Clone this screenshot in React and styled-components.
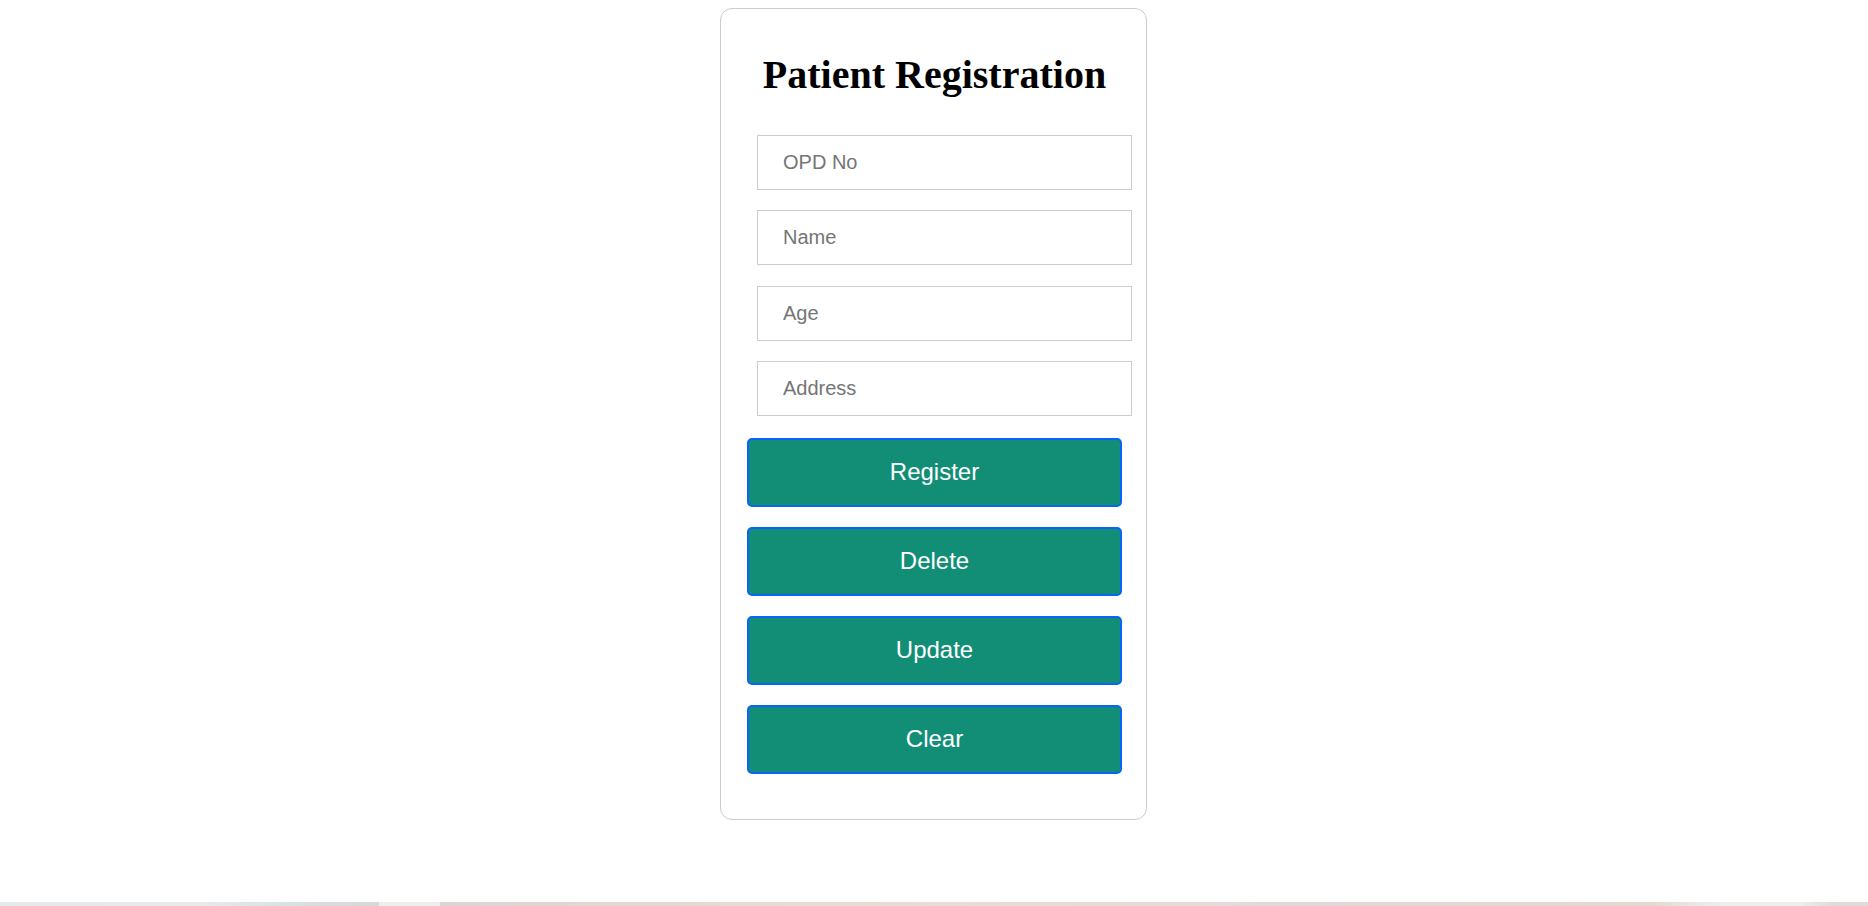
import React from 'react';
import styled, { createGlobalStyle } from 'styled-components';

const GlobalStyle = createGlobalStyle`
    html, body {
        margin: 0;
        padding: 0;
        background: #fff;
    }
`;

const Page = styled.div`
    min-height: 100vh;
    display: flex;
    flex-direction: column;
    box-sizing: border-box;
`;

const Main = styled.main`
    flex: 1;
    display: flex;
    justify-content: center;
    align-items: flex-start;
    padding: 8px 1px 0 0;
`;

const Card = styled.div`
    width: 427px;
    box-sizing: border-box;
    border: 1px solid #cccccc;
    border-radius: 12px;
    padding: 42px 24px 45px 26px;
    display: flex;
    flex-direction: column;
`;

const Title = styled.h1`
    font-family: 'Liberation Serif', 'Times New Roman', serif;
    font-weight: bold;
    font-size: 40px;
    margin: 0 0 37px;
    text-align: center;
    color: #000;
`;

const Form = styled.form`
    display: flex;
    flex-direction: column;
    align-items: flex-start;
`;

const Input = styled.input`
    width: 375px;
    height: 55px;
    box-sizing: border-box;
    margin: 0 0 20.4px 10px;
    padding: 0 25px;
    border: 1px solid #cccccc;
    border-radius: 0;
    font-family: 'Liberation Sans', Arial, sans-serif;
    font-size: 20px;
    color: #333;
    outline: none;

    &::placeholder {
        color: #757575;
    }
`;

const Button = styled.button`
    width: 375px;
    height: 69px;
    box-sizing: border-box;
    margin-top: ${props => (props.first ? '1px' : '0')};
    margin-bottom: 20px;
    background: #138e76;
    border: 2px solid #0a64f8;
    border-radius: 5px;
    color: #fff;
    font-family: 'Liberation Sans', Arial, sans-serif;
    font-size: 24px;
    cursor: pointer;

    &:last-child {
        margin-bottom: 0;
    }
`;

const BottomStrip = styled.div`
    height: 4px;
    background: linear-gradient(
        to right,
        #e3eaea 0px,
        #e6ebea 200px,
        #d8e3e2 280px,
        #d8d8d8 379px,
        #eeeeec 379px,
        #eeeeec 440px,
        #ddd4d2 440px,
        #e6dbd3 700px,
        #eadcd6 950px,
        #e3dad7 1300px,
        #e3d9d1 1650px,
        #eeeeec 1720px,
        #eeeeec 1800px,
        #e3dbdb 1830px,
        #e3dbdb 100%
    );
`;

const fields = ['OPD No', 'Name', 'Age', 'Address'];
const actions = ['Register', 'Delete', 'Update', 'Clear'];

const App = () => {
    return (
        <Page>
            <GlobalStyle />
            <Main>
                <Card>
                    <Title>Patient Registration</Title>
                    <Form onSubmit={e => e.preventDefault()}>
                        {fields.map(f => (
                            <Input key={f} type="text" placeholder={f} />
                        ))}
                        {actions.map((a, i) => (
                            <Button key={a} type="button" first={i === 0}>{a}</Button>
                        ))}
                    </Form>
                </Card>
            </Main>
            <BottomStrip />
        </Page>
    );
};

export default App;
